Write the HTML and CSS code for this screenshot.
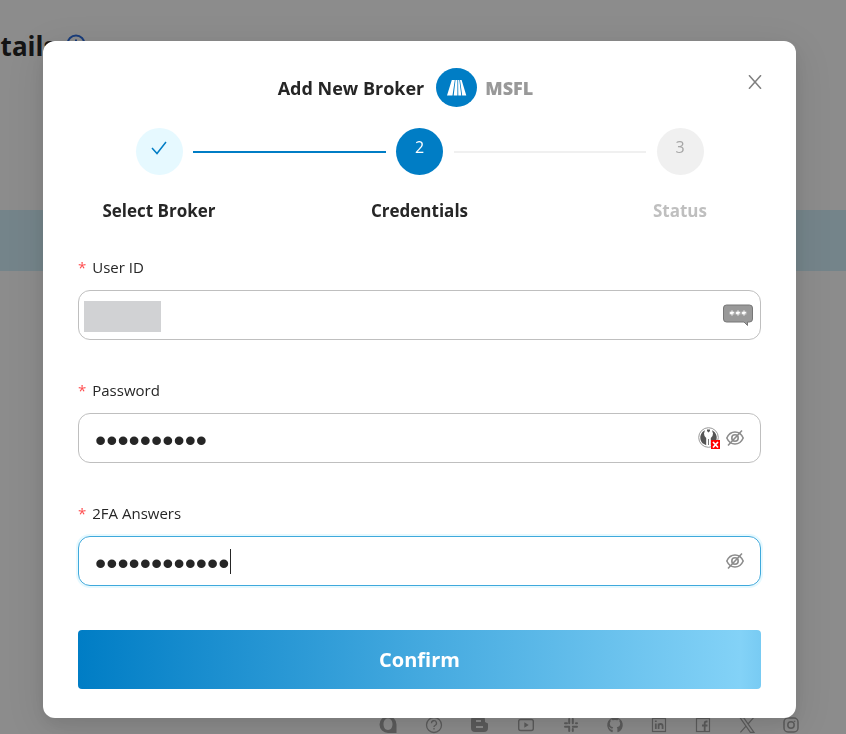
FILE: index.html
```html
<!DOCTYPE html>
<html lang="en">

<head>
    <meta charset="UTF-8">
    <meta name="viewport" content="width=device-width, initial-scale=1.0">
    <title>Add New Broker</title>
    <link rel="stylesheet" href="styles.css">
</head>

<body>
    <div class="page">
        <header class="page-header">
            <h1>Details</h1>
            <svg class="info-icon" viewBox="0 0 20 20" fill="none" stroke="currentColor" stroke-width="2">
                <circle cx="10" cy="10" r="8.5" />
                <path d="M10 9v6M10 5.5v2" />
            </svg>
        </header>
        <div class="band"></div>
        <footer class="socials">
            <svg class="wide" viewBox="0 0 20 18"><path fill="currentColor" fill-rule="evenodd" d="M10 0a8.500 8.500 0 1 0 0 17h8.500V8.500A8.500 8.500 0 0 0 10 0zm0 2.500c3 0 4.500 2.500 4.500 5.500s-1.500 6-4.500 6-4.500-3-4.500-6S7 2.500 10 2.500z" /></svg>
            <svg class="wide" viewBox="0 0 20 18" fill="none" stroke="currentColor" stroke-width="1.300"><circle cx="10" cy="9" r="7.500" /><path d="M7.500 7.300a2.500 2.500 0 1 1 3.500 2.200q-1 .5-1 1.500M10 12v1.500" /></svg>
            <svg class="wide" viewBox="0 0 20 18"><path fill="currentColor" fill-rule="evenodd" d="M5 0h6a4 4 0 0 1 4 4v2l3 1.500V12a4 4 0 0 1-4 4H5a4 4 0 0 1-4-4V4a4 4 0 0 1 4-4zm1 4v2h5V4zm0 6v2h7v-2z" /></svg>
            <svg class="wide" viewBox="0 0 20 18" fill="none" stroke="currentColor" stroke-width="1.400"><rect x="2.700" y="3.500" width="14.600" height="11" rx="2" /><path fill="currentColor" stroke="none" d="M8.300 6.200l4.400 2.800-4.400 2.800z" /></svg>
            <svg viewBox="0 0 18 18" fill="none" stroke="currentColor" stroke-width="2" stroke-linecap="round"><path d="M7.200 3v4.200M3 7.200h2M10.800 3v4.200M15 7.200h-1M10.800 15v-2M15 10.800h-4.200M7.200 15v-4.200M3 10.800h4.200" /></svg>
            <svg viewBox="0 0 18 18"><path fill="currentColor" d="M9 1.200a7.800 7.800 0 0 0-3 15c.5.1.7-.2.7-.5v-2c-2.200.4-2.900-1-3.300-1.900-.2-.4-.5-.8-1-1 1.300-.4 1.900 1.300 2.500 1.600.6.300 1.400.2 1.800 0 0-.5.300-.9.500-1.100-2-.3-3.400-1.200-3.400-3.700 0-.9.300-1.600.8-2.200-.2-.7-.1-1.500.1-2 1 0 1.800.6 2.200.9a7 7 0 0 1 4.200 0c.5-.3 1.300-.9 2.200-.9.300.7.300 1.400.1 2 .5.600.8 1.300.8 2.200 0 2.500-1.400 3.400-3.400 3.700.4.400.6 1 .6 1.700v2.700c0 .3.200.6.600.5a7.800 7.800 0 0 0-3-15z" /></svg>
            <svg viewBox="0 0 18 18" fill="none" stroke="currentColor"><rect x="2.500" y="2.500" width="13" height="13" stroke-width="1.200" /><path stroke-width="1.800" d="M5.800 7.500v5.500M5.800 4.600v1.400M8.600 13V7.500M8.600 10q0-2 2-2t2 2v3" /></svg>
            <svg viewBox="0 0 18 18" fill="none" stroke="currentColor"><rect x="2.500" y="2.500" width="13" height="13" stroke-width="1.200" /><path stroke-width="1.800" d="M13.500 5.500h-1q-1.800 0-1.800 1.800V15M8 9.500h5.500" /></svg>
            <svg viewBox="0 0 18 18" fill="none" stroke="currentColor" stroke-width="1.200"><path d="M2 1.600h3.600L16 16.400h-3.600zM15.600 1.600L10 8M8 10.200l-5.600 6.200" /></svg>
            <svg viewBox="0 0 18 18" fill="none" stroke="currentColor" stroke-width="1.500"><rect x="2" y="2" width="14" height="14" rx="4" /><circle cx="9" cy="9" r="3.200" /><path d="M12.600 4.700v1.200" /></svg>
        </footer>
    </div>

    <div class="modal-mask">
        <section class="modal" role="dialog" aria-modal="true" aria-labelledby="modal-title">
            <button type="button" class="close" aria-label="Close">
                <svg viewBox="0 0 14 14" fill="none" stroke="currentColor" stroke-width="1.500"><path d="M1 0.200l12 13.600M13 0.200l-12 13.600" /></svg>
            </button>

            <div class="modal-header">
                <h2 id="modal-title">Add New Broker</h2>
                <svg class="broker-logo" viewBox="0 0 41 39">
                    <ellipse cx="20.500" cy="19.500" rx="20.500" ry="19.500" fill="#007dc5" />
                    <path fill="#fff" d="M15.800 12h3l-2.300 15.500h-5.500zM19.500 12h1.900v15.500h-3.700zM22.100 12h1.200l2 15.500h-3zM24 12h1.600l4.700 15.500h-4.100z" />
                </svg>
                <span class="broker-name">MSFL</span>
            </div>

            <ol class="steps">
                <li class="step done">
                    <span class="step-icon">
                        <svg viewBox="0 0 16 16" fill="none" stroke="currentColor" stroke-width="1.500"><path d="M1 7l5 5.500 9-11.500" /></svg>
                    </span>
                    <span class="step-title">Select Broker</span>
                </li>
                <li class="step-line done" aria-hidden="true"></li>
                <li class="step active" aria-current="step">
                    <span class="step-icon">2</span>
                    <span class="step-title">Credentials</span>
                </li>
                <li class="step-line" aria-hidden="true"></li>
                <li class="step">
                    <span class="step-icon">3</span>
                    <span class="step-title">Status</span>
                </li>
            </ol>

            <form>
                <div class="field">
                    <label for="user-id">User ID</label>
                    <div class="input-box">
                        <input type="text" id="user-id" autocomplete="off">
                        <span class="redacted"></span>
                        <svg class="hint-icon" viewBox="0 0 30 22">
                            <path fill="#999" stroke="#777" d="M3.500 1h23a3 3 0 0 1 3 3v11a3 3 0 0 1-3 3h-2v3.500l-3.500-3.500H3.500a3 3 0 0 1-3-3V4a3 3 0 0 1 3-3z" />
                            <path stroke="#fff" stroke-width="1.200" d="M9 6.500v5M6.700 8l4.600 2M11.300 8l-4.600 2M15 6.500v5M12.700 8l4.600 2M17.300 8l-4.600 2M21 6.500v5M18.700 8l4.600 2M23.300 8l-4.600 2" />
                        </svg>
                    </div>
                </div>

                <div class="field">
                    <label for="password">Password</label>
                    <div class="input-box">
                        <input type="password" id="password" value="abcdefghij" autocomplete="off">
                        <svg class="key-icon" viewBox="0 0 22 22">
                            <circle cx="10.500" cy="10.500" r="9.800" fill="#fff" stroke="#999" />
                            <path fill="#555" d="M7 3.200a8.200 8.200 0 0 0-2.500 13l3.700 2V11Q6 9.500 6 6.500zM14 3.200a8.200 8.200 0 0 1 2.500 13l-3.700 2V11q2.200-1.500 2.200-4.500z" />
                            <path fill="#555" d="M9 2.600h3v1.500l-1.500 1.400L9 4.100zM10.200 12h.8v6h-.8z" />
                            <path fill="#f00" d="M13 13h9v9h-9z" />
                            <path stroke="#fff" stroke-width="1.700" d="M15 15l5 5.500M20 15l-5 5.500" />
                        </svg>
                        <button type="button" class="toggle" aria-label="Show password">
                            <svg viewBox="0 0 18 18" fill="none" stroke="currentColor" stroke-width="1.600"><path d="M0.800 9Q3.500 3 9 3t8.200 6Q14.500 15 9 15T0.800 9z" /><circle cx="9" cy="9" r="3.200" /><path d="M2 16.500L16 1.500" /></svg>
                        </button>
                    </div>
                </div>

                <div class="field">
                    <label for="answers">2FA Answers</label>
                    <div class="input-box focused">
                        <input type="password" id="answers" value="abcdefghijkl" autocomplete="off">
                        <span class="caret"></span>
                        <button type="button" class="toggle" aria-label="Show answers">
                            <svg viewBox="0 0 18 18" fill="none" stroke="currentColor" stroke-width="1.600"><path d="M0.800 9Q3.500 3 9 3t8.200 6Q14.500 15 9 15T0.800 9z" /><circle cx="9" cy="9" r="3.200" /><path d="M2 16.500L16 1.500" /></svg>
                        </button>
                    </div>
                </div>

                <button type="submit" class="confirm">Confirm</button>
            </form>
        </section>
    </div>
</body>

</html>
```

FILE: styles.css
```css
* {
    box-sizing: border-box;
}

body {
    margin: 0;
    font-family: "Segoe UI", "Open Sans", "Noto Sans", sans-serif;
    font-size: 16px;
    line-height: 24px;
    color: #262626;
    background-color: #fff;
}

/* Page behind the dialog */
.page {
    display: flex;
    flex-direction: column;
    height: 100vh;
    overflow: hidden;
}

.page-header {
    display: flex;
    align-items: center;
    gap: 10px;
    height: 92px;
    margin-left: -34px;
}

.page-header h1 {
    margin: 0;
    font-size: 26px;
    font-weight: 700;
}

.info-icon {
    width: 20px;
    height: 20px;
    margin-bottom: 4px;
    color: #2f6fe0;
}

.band {
    height: 61px;
    margin-top: 118px;
    background-color: #d4f1fc;
}

.socials {
    display: flex;
    justify-content: flex-end;
    gap: 26px;
    margin-top: auto;
    padding-right: 46px;
    color: #a8a8a8;
}

.socials svg {
    flex: none;
    width: 18px;
    height: 18px;
}

.socials .wide {
    width: 20px;
}

/* Dialog */
.modal-mask {
    position: fixed;
    inset: 0;
    padding: 41px 50px 0 43px;
    background-color: rgba(0, 0, 0, 0.45);
    overflow: auto;
}

.modal {
    position: relative;
    max-width: 760px;
    margin: 0 auto;
    padding: 27px 35px 29px;
    background-color: #fff;
    border-radius: 12px;
    box-shadow: 0 6px 16px rgba(0, 0, 0, 0.08), 0 9px 40px 8px rgba(0, 0, 0, 0.08);
}

button {
    font-family: inherit;
    border: none;
    cursor: pointer;
}

.close {
    position: absolute;
    top: 30px;
    right: 30px;
    display: flex;
    align-items: center;
    justify-content: center;
    width: 22px;
    height: 22px;
    padding: 0;
    color: #808080;
    background: none;
}

.close svg {
    width: 14px;
    height: 14px;
}

.modal-header {
    display: flex;
    align-items: center;
    justify-content: center;
    margin-right: 28px;
    font-size: 18px;
}

.modal-header h2 {
    margin: 0;
    font-size: 18px;
    font-weight: 700;
}

.broker-logo {
    width: 41px;
    height: 39px;
    margin: 0 8px 0 12px;
}

.broker-name {
    font-weight: 800;
    color: #999;
}

.steps {
    display: grid;
    grid-template-columns: 162px 1fr 162px 1fr 162px;
    margin: 21px 0 32px;
    padding: 0;
    list-style: none;
}

.step {
    display: flex;
    flex-direction: column;
    align-items: center;
    gap: 24px;
    color: #bfbfbf;
}

.step-icon {
    width: 47px;
    height: 47px;
    line-height: 38px;
    text-align: center;
    color: #a6a6a6;
    background-color: #f0f0f0;
    border-radius: 50%;
}

.step-icon svg {
    width: 16px;
    height: 16px;
    vertical-align: middle;
}

.step-title {
    font-size: 17px;
    font-weight: 700;
}

.step.done,
.step.active {
    color: #262626;
}

.step.done .step-icon {
    color: #007dc5;
    background-color: #e6f9ff;
}

.step.active .step-icon {
    color: #fff;
    background-color: #007dc5;
}

/* The connector reaches into the columns on both sides */
.step-line {
    height: 2px;
    margin: 23px -47px 0;
    background-color: #f0f0f0;
}

.step-line.done {
    background-color: #007dc5;
}

.field {
    margin-bottom: 38px;
}

.field label {
    display: block;
    margin-bottom: 11px;
    font-size: 15px;
}

.field label::before {
    content: "*";
    margin-right: 6px;
    color: #ff4d4f;
}

.input-box {
    position: relative;
    display: flex;
    align-items: center;
    height: 50px;
    padding: 0 16px;
    border: 1px solid #bfbfbf;
    border-radius: 12px;
}

.input-box.focused {
    border-color: #3fa9dc;
    box-shadow: 0 0 0 2px #e6f9ff;
}

.input-box input {
    flex: 1;
    min-width: 0;
    padding: 0;
    border: none;
    outline: none;
    font-family: inherit;
    font-size: 16px;
    color: #262626;
    background: none;
}

.input-box input[type="password"] {
    height: 48px;
    padding-top: 4px;
    font-family: "Liberation Sans", Arial, sans-serif;
    font-size: 32px;
    caret-color: transparent;
}

.redacted {
    position: absolute;
    left: 5px;
    top: 10px;
    width: 77px;
    height: 31px;
    background-color: #d1d2d4;
}

.caret {
    position: absolute;
    left: 151px;
    top: 12px;
    width: 1px;
    height: 25px;
    background-color: #262626;
}

.hint-icon {
    width: 30px;
    height: 22px;
    margin-right: -9px;
}

.key-icon {
    width: 22px;
    height: 22px;
    margin-right: 6px;
}

.toggle {
    display: flex;
    padding: 0;
    color: #8c8c8c;
    background: none;
}

.toggle svg {
    width: 18px;
    height: 18px;
}

.confirm {
    display: block;
    width: 100%;
    height: 59px;
    margin-top: 44px;
    font-size: 20px;
    font-weight: 700;
    color: #fff;
    background: linear-gradient(90deg, #007dc5, #83d2f7 97%, #78cbf3);
    border-radius: 4px;
}
```
